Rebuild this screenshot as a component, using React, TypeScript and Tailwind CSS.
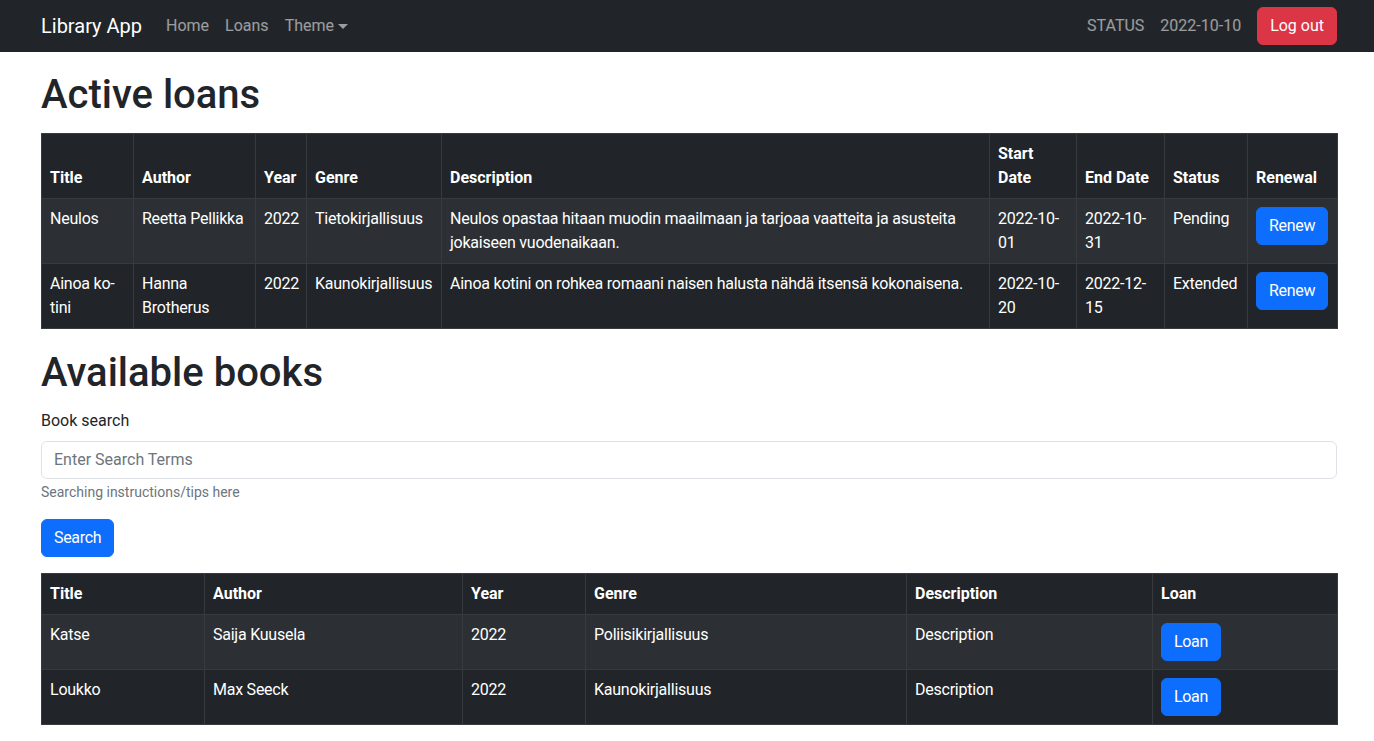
import { ReactNode } from "react";

type Loan = {
  title: string;
  author: string;
  year: number;
  genre: string;
  description: string;
  startDate: string;
  endDate: string;
  status: string;
};

type Book = {
  title: string;
  author: string;
  year: number;
  genre: string;
  description: string;
};

const loans: Loan[] = [
  {
    title: "Neulos",
    author: "Reetta Pellikka",
    year: 2022,
    genre: "Tietokirjallisuus",
    description: "Neulos opastaa hitaan muodin maailmaan ja tarjoaa vaatteita ja asusteita jokaiseen vuodenaikaan.",
    startDate: "2022-10-01",
    endDate: "2022-10-31",
    status: "Pending",
  },
  {
    title: "Ainoa ko\u00ADtini",
    author: "Hanna Brotherus",
    year: 2022,
    genre: "Kaunokirjallisuus",
    description: "Ainoa kotini on rohkea romaani naisen halusta nähdä itsensä kokonaisena.",
    startDate: "2022-10-20",
    endDate: "2022-12-15",
    status: "Extended",
  },
];

const books: Book[] = [
  { title: "Katse", author: "Saija Kuusela", year: 2022, genre: "Poliisikirjallisuus", description: "Description" },
  { title: "Loukko", author: "Max Seeck", year: 2022, genre: "Kaunokirjallisuus", description: "Description" },
];

const Th = ({ children, w }: { children: ReactNode; w: string }) => (
  <th className={`${w} border border-[#373b3e] p-2 text-left align-bottom font-bold tracking-normal`}>{children}</th>
);

const Td = ({ children }: { children: ReactNode }) => (
  <td className="border border-[#373b3e] p-2 align-top tracking-[-0.015em]">{children}</td>
);

const BlueButton = ({ children }: { children: ReactNode }) => (
  <button className="rounded-md border border-[#0d6efd] bg-[#0d6efd] px-3 py-1.5 text-base leading-6 tracking-[-0.02em] text-white">
    {children}
  </button>
);

const App = () => {
  return (
    <div className="min-h-screen bg-white font-['Roboto',sans-serif] text-base leading-6 text-[#212529]">
      {/* Navbar */}
      <nav className="flex h-[52px] items-center bg-[#212529] pl-[41px] pr-[37px]">
        <span className="mr-4 py-[5px] text-xl leading-[30px] text-white">Library App</span>
        <div className="flex items-center">
          <a className="px-2 py-2 text-white/55">Home</a>
          <a className="px-2 py-2 text-white/55">Loans</a>
          <a className="flex items-center px-2 py-2 text-white/55">
            Theme
            <span className="ml-[4px] inline-block h-0 w-0 border-x-[5px] border-t-[5px] border-x-transparent border-t-current" />
          </a>
        </div>
        <div className="ml-auto flex items-center">
          <span className="px-2 py-2 text-white/55">STATUS</span>
          <span className="px-2 py-2 text-white/55">2022-10-10</span>
          <button className="ml-2 rounded-md border border-[#dc3545] bg-[#dc3545] px-3 py-1.5 text-base leading-6 text-white">
            Log out
          </button>
        </div>
      </nav>

      <main className="pl-[41px] pr-[37px] pb-4">
        <h1 className="mt-[19px] mb-[14px] text-[40px] leading-[48px] font-medium">Active loans</h1>

        {/* Active loans table */}
        <table className="w-full table-fixed border-collapse border border-[#373b3e] bg-[#212529] text-white">
          <thead>
            <tr>
              <Th w="w-[92px]">Title</Th>
              <Th w="w-[122px]">Author</Th>
              <Th w="w-[51px]">Year</Th>
              <Th w="w-[135px]">Genre</Th>
              <Th w="w-[548px]">Description</Th>
              <Th w="w-[87px]">Start Date</Th>
              <Th w="w-[88px]">End Date</Th>
              <Th w="w-[83px]">Status</Th>
              <Th w="w-[90px]">Renewal</Th>
            </tr>
          </thead>
          <tbody>
            {loans.map((loan, i) => (
              <tr key={loan.title} className={i % 2 === 0 ? "bg-[#2c3034]" : "bg-[#212529]"}>
                <Td>{loan.title}</Td>
                <Td>{loan.author}</Td>
                <Td>{loan.year}</Td>
                <Td>{loan.genre}</Td>
                <Td>{loan.description}</Td>
                <Td>{loan.startDate}</Td>
                <Td>{loan.endDate}</Td>
                <Td>{loan.status}</Td>
                <Td>
                  <BlueButton>Renew</BlueButton>
                </Td>
              </tr>
            ))}
          </tbody>
        </table>

        <h1 className="mt-[20px] mb-[12px] text-[40px] leading-[48px] font-medium">Available books</h1>

        {/* Search form */}
        <div className="mb-4">
          <label className="mb-2 block">Book search</label>
          <input
            type="text"
            placeholder="Enter Search Terms"
            className="block w-full rounded-md border border-[#dee2e6] px-3 py-1.5 text-base leading-6 placeholder:text-[#6c757d] outline-none"
          />
          <div className="mt-[3px] text-sm leading-[21px] text-[#6c757d]">Searching instructions/tips here</div>
        </div>
        <div className="mb-4">
          <BlueButton>Search</BlueButton>
        </div>

        {/* Available books table */}
        <table className="w-full table-fixed border-collapse border border-[#373b3e] bg-[#212529] text-white">
          <thead>
            <tr>
              <Th w="w-[163px]">Title</Th>
              <Th w="w-[258px]">Author</Th>
              <Th w="w-[123px]">Year</Th>
              <Th w="w-[321px]">Genre</Th>
              <Th w="w-[246px]">Description</Th>
              <Th w="w-[185px]">Loan</Th>
            </tr>
          </thead>
          <tbody>
            {books.map((book, i) => (
              <tr key={book.title} className={i % 2 === 0 ? "bg-[#2c3034]" : "bg-[#212529]"}>
                <Td>{book.title}</Td>
                <Td>{book.author}</Td>
                <Td>{book.year}</Td>
                <Td>{book.genre}</Td>
                <Td>{book.description}</Td>
                <Td>
                  <BlueButton>Loan</BlueButton>
                </Td>
              </tr>
            ))}
          </tbody>
        </table>
      </main>
    </div>
  );
};

export default App;
